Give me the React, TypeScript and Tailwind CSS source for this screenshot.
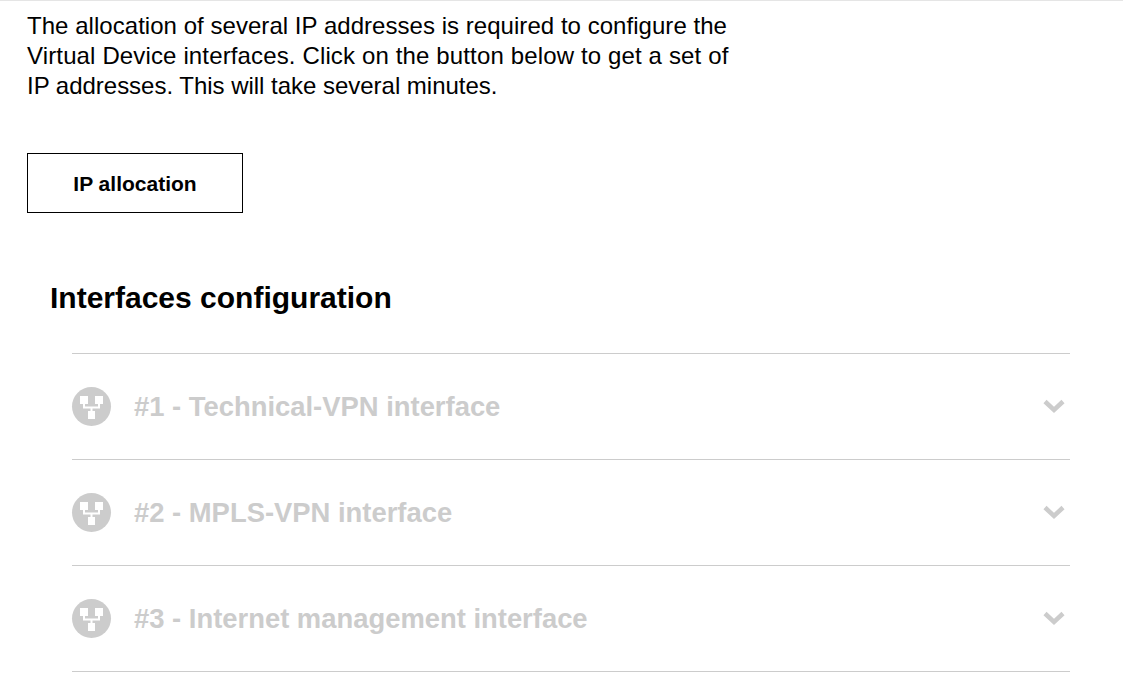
const interfaces = [
  "#1 - Technical-VPN interface",
  "#2 - MPLS-VPN interface",
  "#3 - Internet management interface",
];

function NetworkIcon() {
  return (
    <span className="flex h-[39px] w-[39px] shrink-0 items-center justify-center rounded-full bg-[#cccccc]">
      <svg width="23" height="23" viewBox="0 0 23 23" fill="none" className="mt-[2px]">
        <rect x="0" y="0" width="8" height="8" fill="#fff" />
        <rect x="15" y="0" width="8" height="8" fill="#fff" />
        <rect x="8" y="15" width="7" height="8" fill="#fff" />
        <path d="M4 7v4.500h15V7M11.500 11.500V16" stroke="#fff" strokeWidth="2" />
      </svg>
    </span>
  );
}

function Chevron() {
  return (
    <svg width="24" height="16" viewBox="0 0 24 16" fill="none" className="mr-[4px] mt-[-2px]">
      <path d="M3 3.500 12 12 21 3.500" stroke="#cccccc" strokeWidth="4.500" />
    </svg>
  );
}

export default function App() {
  return (
    <div className="h-[681px] w-[1123px] overflow-hidden border-t border-[#e5e5e5] bg-white font-['Liberation_Sans',Arial,sans-serif] text-black">
      <div className="pl-[27px] pt-[10px]">
        <p className="w-[760px] text-[24px] leading-[30px]">
          <span className="block tracking-[0.04px]">
            The allocation of several IP addresses is required to configure the
          </span>
          <span className="block tracking-[0.14px]">
            Virtual Device interfaces. Click on the button below to get a set of
          </span>
          <span className="block tracking-[-0.02px]">
            IP addresses. This will take several minutes.
          </span>
        </p>
        <button className="mt-[52px] block h-[60px] w-[216px] border border-black pt-[2px] text-[21px] font-bold">
          IP allocation
        </button>
      </div>
      <h2 className="ml-[50px] mt-[66px] text-[30px] font-bold leading-[38px]">
        Interfaces configuration
      </h2>
      <div className="ml-[72px] mt-[36px] w-[998px] border-b border-[#cccccc]">
        {interfaces.map((label) => (
          <div
            key={label}
            className="flex h-[106px] items-center border-t border-[#cccccc]"
          >
            <NetworkIcon />
            <span className="ml-[23px] flex-1 text-[27.4px] font-bold text-[#cccccc]">
              {label}
            </span>
            <Chevron />
          </div>
        ))}
      </div>
    </div>
  );
}
